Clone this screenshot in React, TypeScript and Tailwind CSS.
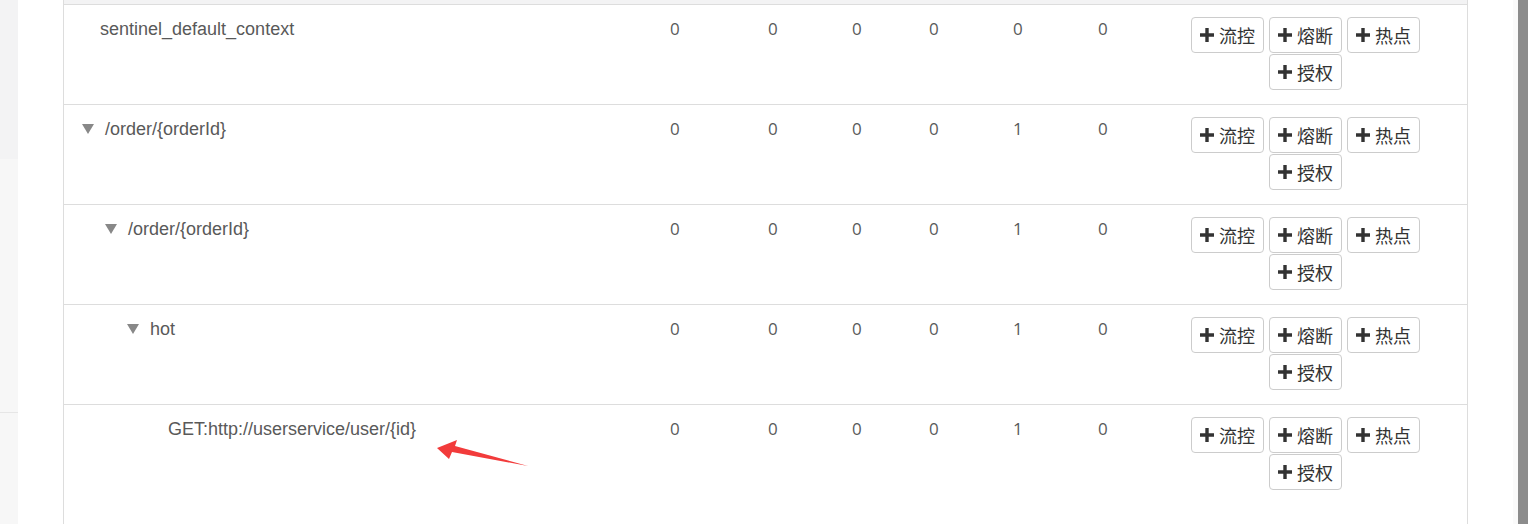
import React from "react";

type Row = {
  name: string;
  toggle: boolean;
  indent: number; // left offset of the name block inside the cell
  stats: number[];
};

const rows: Row[] = [
  { name: "sentinel_default_context", toggle: false, indent: 28, stats: [0, 0, 0, 0, 0, 0] },
  { name: "/order/{orderId}", toggle: true, indent: 10, stats: [0, 0, 0, 0, 1, 0] },
  { name: "/order/{orderId}", toggle: true, indent: 33, stats: [0, 0, 0, 0, 1, 0] },
  { name: "hot", toggle: true, indent: 55, stats: [0, 0, 0, 0, 1, 0] },
  { name: "GET:http://userservice/user/{id}", toggle: false, indent: 96, stats: [0, 0, 0, 0, 1, 0] },
];

const statCols = ["w-[98px]", "w-[84px]", "w-[77px]", "w-[84px]", "w-[85px]", "w-[54px]"];

function Plus() {
  return (
    <svg width="14" height="14" viewBox="0 0 14 14" className="shrink-0">
      <path d="M5.3 0h3.4v5.3H14v3.4H8.7V14H5.3V8.7H0V5.3h5.3z" fill="#333" />
    </svg>
  );
}

function ActionButton({ label }: { label: string }) {
  return (
    <button className="flex h-[36px] w-[73px] items-center justify-center gap-[5px] rounded-[4px] border border-[#cccccc] bg-white text-[18px] leading-none text-[#333] [font-family:'Noto_Sans_CJK_SC',sans-serif]">
      <Plus />
      <span>{label}</span>
    </button>
  );
}

function Toggle() {
  return (
    <svg width="12" height="10" viewBox="0 0 12 10" className="mr-[11px] shrink-0">
      <path d="M0 0h12L6 10z" fill="#888" />
    </svg>
  );
}

function TableRow({ row, last }: { row: Row; last: boolean }) {
  return (
    <div className={last ? "flex h-[140px]" : "flex h-[100px] border-b border-[#dddddd]"}>
      <div className="w-[598px] pl-2 pt-[12px]">
        <div className="flex items-center" style={{ marginLeft: row.indent }}>
          {row.toggle && <Toggle />}
          <span className="text-[18px] leading-[24px] text-[#595959] [font-family:'Liberation_Sans',Arial,sans-serif]">
            {row.name}
          </span>
        </div>
      </div>
      {row.stats.map((v, i) => (
        <div
          key={i}
          className={`${statCols[i]} pl-2 pt-[12px] text-[17px] leading-[24px] text-[#5a5a5a] [font-family:'Open_Sans',sans-serif]`}
        >
          {v}
        </div>
      ))}
      <div className="flex-1 pt-[12px]">
        <div className="mx-auto flex w-[232px] flex-wrap justify-center gap-x-[5px] gap-y-[1px]">
          <ActionButton label="流控" />
          <ActionButton label="熔断" />
          <ActionButton label="热点" />
          <ActionButton label="授权" />
        </div>
      </div>
    </div>
  );
}

export default function App() {
  return (
    <div className="relative flex h-[524px] w-[1528px] overflow-hidden bg-white">
      {/* left sidebar edge */}
      <div className="flex w-[18px] flex-col bg-[#f7f7f7]">
        <div className="h-[159px] bg-[#f3f3f4]" />
        <div className="h-[253px]" />
        <div className="h-px bg-[#e6e6e6]" />
      </div>
      <div className="w-[45px]" />

      {/* table */}
      <div className="w-[1405px] border-x border-[#dddddd]">
        <div className="h-[5px] border-b border-[#dddddd] bg-[#f3f3f4]" />
        {rows.map((r, i) => (
          <TableRow key={i} row={r} last={i === rows.length - 1} />
        ))}
      </div>

      <div className="w-[45px]" />
      <div className="w-[5px] bg-[#fafafa]" />
      <div className="w-[10px] bg-[#8c8c8c]" />

      {/* red annotation arrow */}
      <svg
        className="pointer-events-none absolute left-0 top-0"
        width="1528"
        height="524"
        viewBox="0 0 1528 524"
      >
        <polygon
          points="437,448 457,440 455,446 528,466 452,452 449,459"
          fill="#f23b3b"
        />
      </svg>
    </div>
  );
}
